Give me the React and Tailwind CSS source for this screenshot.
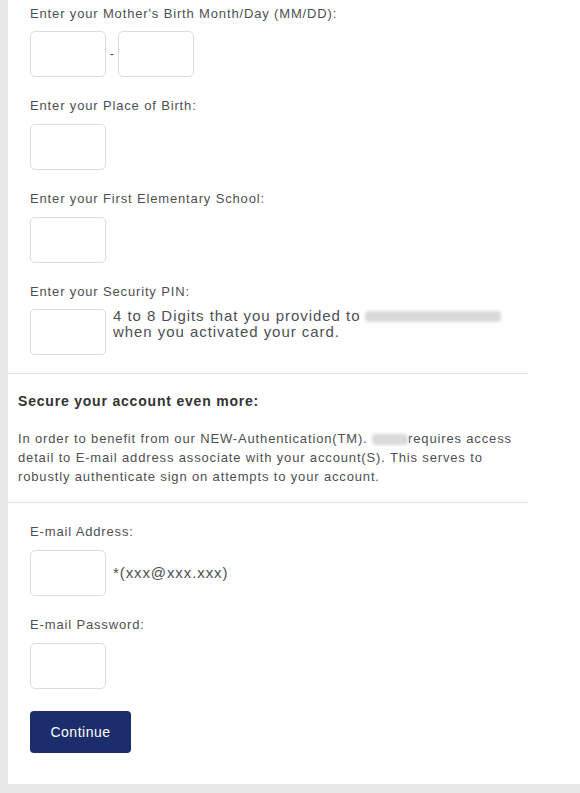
function Field({ className = "" }) {
    return (
        <div className={`h-[46px] w-[76px] shrink-0 rounded-[5px] border border-[#dcdcdc] bg-white ${className}`} />
    );
}

function Blurred({ className = "" }) {
    return <span className={`inline-block align-middle rounded-sm bg-[#d9d9d9] blur-[1.5px] ${className}`} />;
}

function Label({ children, className = "" }) {
    return <div className={`text-[13px] leading-[16px] tracking-[0.85px] text-[#4d4f53] ${className}`}>{children}</div>;
}

export default function App() {
    return (
        <div className="min-h-[793px] bg-[#e8e8e8] pl-[8px] pb-[10px] font-['Liberation_Sans',Arial,sans-serif]">
            <div className="bg-white pb-[31px]">
                <div className="pl-[22px] pt-[6px]">
                    <Label>Enter your Mother's Birth Month/Day (MM/DD):</Label>
                    <div className="mt-[9px] flex items-center">
                        <Field />
                        <span className="w-[12px] text-center text-[13px] text-[#4d4f53]">-</span>
                        <Field />
                    </div>

                    <Label className="mt-[21px]">Enter your Place of Birth:</Label>
                    <Field className="mt-[10px]" />

                    <Label className="mt-[21px]">Enter your First Elementary School:</Label>
                    <Field className="mt-[10px]" />

                    <Label className="mt-[21px]">Enter your Security PIN:</Label>
                    <div className="mt-[9px] flex items-start">
                        <Field />
                        <div className="ml-[7px] mt-[-1px] text-[15px] leading-[16px] tracking-[0.95px] text-[#4d4f53]">
                            <div className="flex items-center">
                                4 to 8 Digits that you provided to
                                <Blurred className="ml-[5px] h-[11px] w-[136px]" />
                            </div>
                            <div>when you activated your card.</div>
                        </div>
                    </div>
                </div>

                <div className="mt-[18px] w-[520px] border-t border-[#e3e3e3]" />

                <div className="w-[520px] px-[10px] pt-[19px]">
                    <div className="text-[14px] font-bold leading-[16px] tracking-[0.8px] text-[#333]">
                        Secure your account even more:
                    </div>
                    <p className="mt-[20px] text-[13px] leading-[19px] tracking-[0.85px] text-[#4d4f53]">
                        In order to benefit from our NEW-Authentication(TM).{" "}
                        <Blurred className="h-[11px] w-[36px]" />requires access detail to E-mail address
                        associate with your account(S). This serves to robustly authenticate sign on attempts to
                        your account.
                    </p>
                </div>

                <div className="mt-[16px] w-[520px] border-t border-[#e3e3e3]" />

                <div className="pl-[22px] pt-[21px]">
                    <Label>E-mail Address:</Label>
                    <div className="mt-[10px] flex items-center">
                        <Field />
                        <span className="ml-[7px] text-[15px] tracking-[0.9px] text-[#4d4f53]">*(xxx@xxx.xxx)</span>
                    </div>

                    <Label className="mt-[21px]">E-mail Password:</Label>
                    <Field className="mt-[10px]" />

                    <button
                        type="button"
                        className="mt-[22px] h-[42px] w-[101px] rounded-[4px] bg-[#1b2d6b] text-[14px] tracking-[0.5px] text-white"
                    >
                        Continue
                    </button>
                </div>
            </div>
        </div>
    );
}
